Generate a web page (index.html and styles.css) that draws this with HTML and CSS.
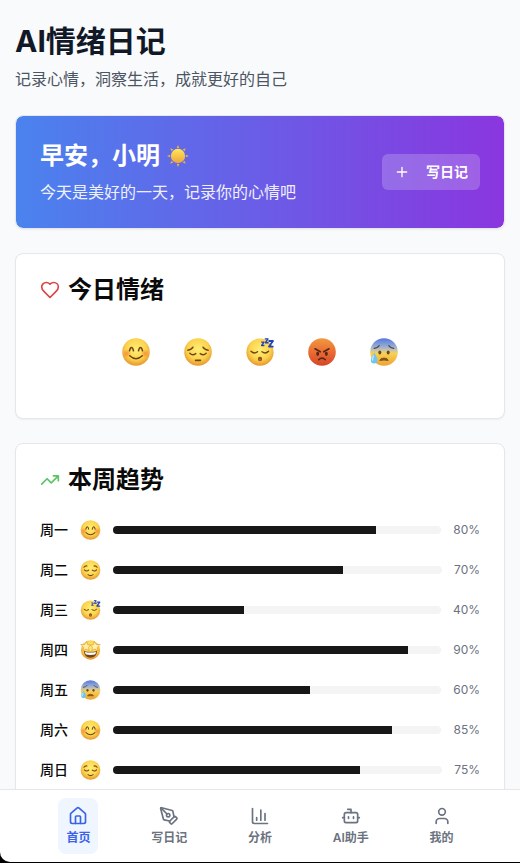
FILE: index.html
```html
<!DOCTYPE html>
<html lang="zh-CN">
<head>
<meta charset="utf-8">
<meta name="viewport" content="width=device-width, initial-scale=1">
<title>AI情绪日记</title>
<link rel="stylesheet" href="styles.css">
</head>
<body>
<svg class="sprite" aria-hidden="true">
  <defs>
    <radialGradient id="gold" cx=".5" cy=".4" r=".62">
      <stop offset="0" stop-color="#ffee76"/><stop offset=".6" stop-color="#fcd44e"/><stop offset="1" stop-color="#e58f2a"/>
    </radialGradient>
    <radialGradient id="cheek">
      <stop offset="0" stop-color="#f47b35" stop-opacity=".75"/><stop offset="1" stop-color="#f47b35" stop-opacity="0"/>
    </radialGradient>
    <linearGradient id="rage" x2="0" y2="1">
      <stop offset="0" stop-color="#f09a40"/><stop offset=".5" stop-color="#ea6c33"/><stop offset="1" stop-color="#d64526"/>
    </linearGradient>
    <linearGradient id="cold" x2="0" y2="1">
      <stop offset="0" stop-color="#5478d6"/><stop offset=".25" stop-color="#8ba3dc"/><stop offset=".45" stop-color="#c9c7a6"/><stop offset=".55" stop-color="#f8d055"/><stop offset="1" stop-color="#eda332"/>
    </linearGradient>
    <linearGradient id="sunfill" x2="0" y2="1">
      <stop offset="0" stop-color="#ffe75b"/><stop offset="1" stop-color="#eda43a"/>
    </linearGradient>
  </defs>
  <symbol id="e-smile" viewBox="0 0 28 28">
    <circle cx="14" cy="14" r="13.8" fill="url(#gold)"/>
    <circle cx="4.8" cy="15.5" r="4.5" fill="url(#cheek)"/><circle cx="23.2" cy="15.5" r="4.5" fill="url(#cheek)"/>
    <g fill="none" stroke="#6e4316" stroke-width="1.5" stroke-linecap="round"><path d="M7.5 12.8q.7-3.4 2-3.4t2 3.4M16.5 12.8q.7-3.4 2-3.4t2 3.4M7.7 17.8q6.3 5.8 12.6 0"/></g>
  </symbol>
  <symbol id="e-sad" viewBox="0 0 28 28">
    <circle cx="14" cy="14" r="13.8" fill="url(#gold)"/>
    <g fill="none" stroke="#6e4316" stroke-width="1.4" stroke-linecap="round"><path d="M3.8 12.2q3.7-.3 5.2-3M24.2 12.2q-3.7-.3-5.2-3M5.8 15.2q2.7 2.7 6 .4M22.2 15.2q-2.7 2.7-6 .4"/><path d="M11.6 22.3h4.8" stroke-width="1.7"/></g>
  </symbol>
  <symbol id="e-calm" viewBox="0 0 28 28">
    <circle cx="14" cy="14" r="13.8" fill="url(#gold)"/>
    <g fill="none" stroke="#6e4316" stroke-width="1.5" stroke-linecap="round"><path d="M4.8 10.2q1.8-2.4 4.2-1.8M23.2 10.2q-1.8-2.4-4.2-1.8M5.5 13.8q2.7 3.2 6 .4M22.5 13.8q-2.7 3.2-6 .4M10.5 20.5q3.5 2.7 7 0"/></g>
  </symbol>
  <symbol id="e-sleep" viewBox="0 0 28 28">
    <circle cx="14" cy="14.2" r="13.6" fill="url(#gold)"/>
    <g fill="none" stroke="#6e4316" stroke-width="1.4" stroke-linecap="round"><path d="M5 13.2q3 3.2 6.5.5M16 13.7q3.500 2.700 6.500-.5"/></g>
    <ellipse cx="14" cy="21" rx="2.1" ry="2.3" fill="#83541b"/><ellipse cx="14" cy="21.8" rx="1.2" ry="1" fill="#bd602e"/>
    <g fill="none" stroke="#1f43ba" stroke-linejoin="round"><path stroke-width="1.3" d="M15.2 4.2h2.8l-2.4 3.3h2.8"/><path stroke-width="1.4" d="M18.8.9h3.2l-2.6 3.8h3.2"/><path stroke-width="1.8" d="M22.5 3h4.500l-4 5.600h4.500"/></g>
  </symbol>
  <symbol id="e-angry" viewBox="0 0 28 28">
    <circle cx="14" cy="14" r="13.8" fill="url(#rage)"/>
    <g fill="none" stroke="#542719" stroke-width="1.6" stroke-linecap="round"><path d="M7 10.8l5.3 3M21 10.8l-5.3 3M10.7 21.7q3.3-3.200 6.600 0"/></g>
    <ellipse cx="9.7" cy="15.8" rx="1.5" ry="2.1" fill="#542719"/><ellipse cx="18.3" cy="15.8" rx="1.5" ry="2.1" fill="#542719"/>
  </symbol>
  <symbol id="e-anxious" viewBox="0 0 28 28">
    <circle cx="14" cy="14" r="13.8" fill="url(#cold)"/>
    <g fill="none" stroke="#4c4855" stroke-width="1.3" stroke-linecap="round"><path d="M4.2 10.3q3.500-.2 5-2.800M23.800 10.300q-3.500-.2-5-2.800"/></g>
    <ellipse cx="9.8" cy="14.5" rx="1.5" ry="2" fill="#6e4316"/><ellipse cx="18.2" cy="14.5" rx="1.5" ry="2" fill="#6e4316"/>
    <path d="M9.8 22.400q.5-2.300 4.200-2.300t4.200 2.300q-4.200-.8-8.400 0z" fill="#83541b" stroke="#83541b" stroke-linejoin="round"/>
    <path d="M4.3 14.5c1 2.600 3.200 5.200 3.200 7.700a3.300 3.300 0 0 1-6.600 0c0-2.500 2.400-5.100 3.400-7.700z" fill="#6dc6f1"/><path d="M3.5 18q-1 2-.9 4" fill="none" stroke="#c2ebfb" stroke-width="1.3" stroke-linecap="round"/>
  </symbol>
  <symbol id="e-star" viewBox="0 0 28 28">
    <circle cx="14" cy="14" r="13.5" fill="url(#gold)"/>
    <g fill="#fff0a8" stroke="#d98d28" stroke-width=".8" stroke-linejoin="round"><path d="M8.600 2l1.500 4.500 4 .5-2.800 3.300.9 4.500-4.200-2-4.300 2.200.7-4.500L.4 6.200l5.300.2z"/><path d="M19.400 2l-1.500 4.500-4 .5 2.800 3.300-.9 4.500 4.200-2 4.300 2.200-.7-4.500 4-4.300-5.300.2z"/></g>
    <path d="M4.800 15.300q9.200 2.400 18.400 0-.6 9.400-9.200 9.400t-9.200-9.400z" fill="#72431c"/><path d="M6.200 16.800q7.800 1.700 15.600 0-.4 2.700-1.500 3.400-6.300 1.300-12.600 0-1.100-.7-1.500-3.400z" fill="#fff"/>
  </symbol>
  <symbol id="e-sun" viewBox="0 0 24 24">
    <g fill="#edb343"><path id="ray" d="M12 0l1.400 3.400h-2.800z"/><use href="#ray" transform="rotate(45 12 12)"/><use href="#ray" transform="rotate(90 12 12)"/><use href="#ray" transform="rotate(135 12 12)"/><use href="#ray" transform="rotate(180 12 12)"/><use href="#ray" transform="rotate(225 12 12)"/><use href="#ray" transform="rotate(270 12 12)"/><use href="#ray" transform="rotate(315 12 12)"/></g>
    <circle cx="12" cy="12" r="7.8" fill="url(#sunfill)"/>
  </symbol>
</svg>

<main class="page">
  <header class="intro">
    <h1>AI情绪日记</h1>
    <p>记录心情，洞察生活，成就更好的自己</p>
  </header>

  <section class="card greeting">
    <div>
      <h2>早安，小明 <svg class="sun" role="img" aria-label="太阳"><use href="#e-sun"/></svg></h2>
      <p>今天是美好的一天，记录你的心情吧</p>
    </div>
    <button class="write" type="button">
      <svg class="icon" viewBox="0 0 24 24" aria-hidden="true"><path d="M5 12h14M12 5v14"/></svg>写日记
    </button>
  </section>

  <section class="card">
    <h2 class="card-title"><svg class="icon heart" viewBox="0 0 24 24" aria-hidden="true"><path d="M19 14c1.490-1.460 3-3.210 3-5.500A5.500 5.500 0 0 0 16.500 3c-1.760 0-3 .5-4.500 2-1.500-1.500-2.740-2-4.500-2A5.500 5.500 0 0 0 2 8.500c0 2.300 1.500 4.050 3 5.500l7 7Z"/></svg>今日情绪</h2>
    <div class="moods">
      <button type="button" aria-label="开心"><svg><use href="#e-smile"/></svg></button>
      <button type="button" aria-label="难过"><svg><use href="#e-sad"/></svg></button>
      <button type="button" aria-label="疲惫"><svg><use href="#e-sleep"/></svg></button>
      <button type="button" aria-label="生气"><svg><use href="#e-angry"/></svg></button>
      <button type="button" aria-label="焦虑"><svg><use href="#e-anxious"/></svg></button>
    </div>
  </section>

  <section class="card">
    <h2 class="card-title"><svg class="icon trend" viewBox="0 0 24 24" aria-hidden="true"><path d="M22 7l-8.500 8.500-5-5L2 17M16 7h6v6"/></svg>本周趋势</h2>
    <ul class="week">
      <li><span class="day">周一</span><svg class="face"><use href="#e-smile"/></svg><div class="track"><div class="fill" style="width:80%"></div></div><span class="pct">80%</span></li>
      <li><span class="day">周二</span><svg class="face"><use href="#e-calm"/></svg><div class="track"><div class="fill" style="width:70%"></div></div><span class="pct">70%</span></li>
      <li><span class="day">周三</span><svg class="face"><use href="#e-sleep"/></svg><div class="track"><div class="fill" style="width:40%"></div></div><span class="pct">40%</span></li>
      <li><span class="day">周四</span><svg class="face"><use href="#e-star"/></svg><div class="track"><div class="fill" style="width:90%"></div></div><span class="pct">90%</span></li>
      <li><span class="day">周五</span><svg class="face"><use href="#e-anxious"/></svg><div class="track"><div class="fill" style="width:60%"></div></div><span class="pct">60%</span></li>
      <li><span class="day">周六</span><svg class="face"><use href="#e-smile"/></svg><div class="track"><div class="fill" style="width:85%"></div></div><span class="pct">85%</span></li>
      <li><span class="day">周日</span><svg class="face"><use href="#e-calm"/></svg><div class="track"><div class="fill" style="width:75%"></div></div><span class="pct">75%</span></li>
    </ul>
  </section>
</main>

<nav class="tabbar">
  <div class="tabbar-surface">
    <div class="tabs">
      <a class="active" href="#home" aria-current="page"><svg class="icon" viewBox="0 0 24 24" aria-hidden="true"><path d="M15 21v-8a1 1 0 0 0-1-1h-4a1 1 0 0 0-1 1v8"/><path d="M3 10a2 2 0 0 1 .709-1.528l7-5.999a2 2 0 0 1 2.582 0l7 5.999A2 2 0 0 1 21 10v9a2 2 0 0 1-2 2H5a2 2 0 0 1-2-2z"/></svg>首页</a>
      <a href="#write"><svg class="icon" viewBox="0 0 24 24" aria-hidden="true"><path d="M15.707 21.293a1 1 0 0 1-1.414 0l-1.586-1.586a1 1 0 0 1 0-1.414l5.586-5.586a1 1 0 0 1 1.414 0l1.586 1.586a1 1 0 0 1 0 1.414z"/><path d="m18 13-1.375-6.874a1 1 0 0 0-.746-.776L3.235 2.028a1 1 0 0 0-1.207 1.207L5.350 15.879a1 1 0 0 0 .776.746L13 18"/><path d="m2.300 2.300 7.286 7.286"/><circle cx="11" cy="11" r="2"/></svg>写日记</a>
      <a href="#analysis"><svg class="icon" viewBox="0 0 24 24" aria-hidden="true"><path d="M3 3v16a2 2 0 0 0 2 2h16M18 17V9M13 17V5M8 17v-3"/></svg>分析</a>
      <a href="#assistant"><svg class="icon" viewBox="0 0 24 24" aria-hidden="true"><path d="M12 8V4H8"/><rect x="4" y="8" width="16" height="12" rx="2"/><path d="M2 14h2M20 14h2M15 13v2M9 13v2"/></svg>AI助手</a>
      <a href="#me"><svg class="icon" viewBox="0 0 24 24" aria-hidden="true"><path d="M19 21v-2a4 4 0 0 0-4-4H9a4 4 0 0 0-4 4v2"/><circle cx="12" cy="7" r="4"/></svg>我的</a>
    </div>
  </div>
</nav>
</body>
</html>
```
FILE: styles.css
```css
*, *::before, *::after {
  box-sizing: border-box;
}

h1, h2, p, ul {
  margin: 0;
  padding: 0;
}

body {
  margin: 0;
  height: 100vh;
  display: flex;
  flex-direction: column;
  background: #f9fafb;
  color: #0a0a0a;
  font-family: Inter, "Noto Sans CJK SC", sans-serif;
  font-size: 16px;
  line-height: 24px;
}

button {
  border: 0;
  font: inherit;
  color: inherit;
  cursor: pointer;
}

svg {
  display: block;
  flex: none;
}

.sprite {
  position: absolute;
  width: 0;
  height: 0;
}

.icon {
  width: 20px;
  height: 20px;
  fill: none;
  stroke: currentColor;
  stroke-width: 2;
  stroke-linecap: round;
  stroke-linejoin: round;
}

.page {
  flex: 1;
  min-height: 0;
  overflow-y: auto;
  scrollbar-width: none;
  display: flex;
  flex-direction: column;
  gap: 24px;
  padding: 23px 15px 24px;
}

.page > * {
  flex: none;
}

.intro h1 {
  font-size: 30px;
  line-height: 36px;
  font-weight: 700;
  color: #111827;
}

.intro p {
  margin-top: 8px;
  color: #4b5563;
}

.card {
  padding: 24px;
  border: 1px solid #e5e7eb;
  border-radius: 8px;
  background: #fff;
  box-shadow: 0 1px 2px rgb(0 0 0 / 5%);
}

.greeting {
  display: flex;
  align-items: center;
  justify-content: space-between;
  background: linear-gradient(to right, #4a83ee, #8a36df) padding-box;
  color: #fff;
}

.greeting h2 {
  display: flex;
  align-items: center;
  gap: 7px;
  font-size: 24px;
  line-height: 32px;
  font-weight: 700;
}

.greeting p {
  margin-top: 8px;
  opacity: .9;
}

.sun {
  width: 22px;
  height: 22px;
}

.write {
  display: flex;
  align-items: center;
  gap: 16px;
  height: 36px;
  padding: 0 12px;
  border-radius: 6px;
  background: rgb(255 255 255 / 20%);
  font-size: 14px;
  line-height: 20px;
  font-weight: 600;
}

.write .icon {
  width: 16px;
  height: 16px;
}

.card-title {
  display: flex;
  align-items: center;
  gap: 8px;
  font-size: 24px;
  line-height: 24px;
  font-weight: 600;
}

.heart {
  color: #dc4446;
}

.trend {
  color: #5ac466;
}

.moods {
  display: flex;
  justify-content: center;
  gap: 16px;
  margin: 24px 0 16px;
}

.moods button {
  display: grid;
  place-items: center;
  width: 46px;
  height: 52px;
  padding: 8px;
  border-radius: 8px;
  background: none;
}

.moods svg {
  width: 28px;
  height: 28px;
}

.week {
  display: grid;
  gap: 12px;
  margin-top: 24px;
  list-style: none;
}

.week li {
  display: flex;
  align-items: center;
  gap: 12px;
  height: 28px;
}

.day {
  font-size: 14px;
  line-height: 20px;
  font-weight: 500;
}

.face {
  width: 21px;
  height: 20px;
}

.track {
  flex: 1;
  height: 8px;
  overflow: hidden;
  border-radius: 4px;
  background: #f4f4f5;
}

.fill {
  height: 100%;
  background: #171717;
}

.pct {
  font-size: 12px;
  line-height: 16px;
  color: #6b7280;
}

.tabbar {
  flex: none;
  padding-bottom: 1px;
  background: #000;
}

.tabbar-surface {
  padding: 8px 0;
  border-top: 1px solid #e5e7eb;
  border-bottom-left-radius: 10px;
  background: #fff;
}

.tabs {
  display: flex;
  justify-content: space-around;
  max-width: 448px;
  margin: 0 auto;
}

.tabs a {
  display: flex;
  flex-direction: column;
  align-items: center;
  gap: 4px;
  padding: 8px;
  border-radius: 8px;
  color: #6b7280;
  font-size: 12px;
  line-height: 16px;
  font-weight: 600;
  text-decoration: none;
}

.tabs .active {
  background: #eff6ff;
  color: #3b63e6;
}
```
